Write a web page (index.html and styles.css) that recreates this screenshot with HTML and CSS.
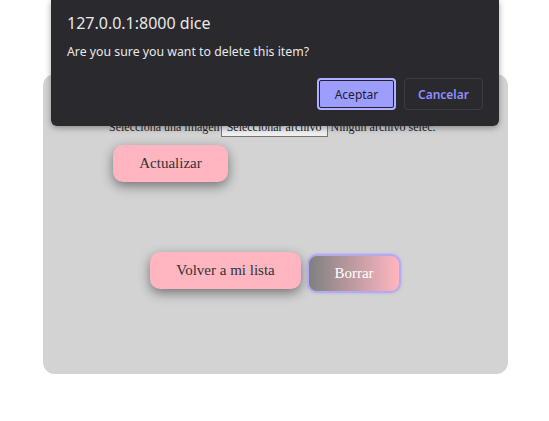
FILE: index.html
```html
<!DOCTYPE html>
<html lang="es">
<head>
<meta charset="utf-8">
<link rel="stylesheet" href="styles.css">
</head>
<body>
<main class="card">
  <form class="form">
    <div class="file-row">
      <span class="file-label">Selecciona una imagen</span>
      <span class="file-btn">Seleccionar archivo</span>
      <span class="file-name">Ningún archivo selec.</span>
    </div>
    <button type="button" class="btn btn-pink btn-update">Actualizar</button>
  </form>
  <div class="actions">
    <button type="button" class="btn btn-pink">Volver a mi lista</button>
    <button type="button" class="btn btn-delete">Borrar</button>
  </div>
</main>
<div class="dialog">
  <div class="dialog-title">127.0.0.1:8000 dice</div>
  <div class="dialog-msg">Are you sure you want to delete this item?</div>
  <div class="dialog-buttons">
    <button type="button" class="dbtn dbtn-ok">Aceptar</button>
    <button type="button" class="dbtn dbtn-cancel">Cancelar</button>
  </div>
</div>
</body>
</html>
```

FILE: styles.css
```css
html, body {
  margin: 0;
  padding: 0;
  background: #ffffff;
}
body {
  font-family: "Liberation Serif", "Times New Roman", serif;
  font-size: 16px;
  color: #222;
}
.card {
  width: 465px;
  height: 300px;
  margin: 74px 0 0 43px;
  box-sizing: border-box;
  background: #d3d3d3;
  border-radius: 12px;
  padding: 42px 0 0 66px;
}
.form {
  display: flex;
  flex-direction: column;
  align-items: flex-start;
}
.file-row {
  display: flex;
  align-items: center;
  font-size: 12px;
  height: 22px;
}
.file-btn {
  border: 1px solid #767676;
  background: #efefef;
  padding: 1px 5px;
  margin: 0 3px 0 1px;
}
.btn {
  font-family: "Liberation Serif", "Times New Roman", serif;
  font-size: 15px;
  border: none;
  border-radius: 10px;
  padding: 0;
  height: 37px;
  color: #333;
}
.btn-pink {
  background: #ffb6c1;
  box-shadow: 0 4px 12px rgba(0, 0, 0, 0.45);
}
.btn-update {
  margin: 7px 0 0 4px;
  width: 115px;
}
.actions {
  display: flex;
  align-items: flex-start;
  gap: 6px;
  margin: 70px 0 0 41px;
}
.actions .btn-pink {
  width: 151px;
}
.btn-delete {
  width: 94px;
  height: 39px;
  margin-top: 2px;
  color: #fff;
  background: linear-gradient(to right, #808080, #ffb6c1);
  border: 2px solid #b4aaf0;
  box-shadow: 0 0 3px rgba(160, 150, 240, 0.7);
}
.dialog {
  position: absolute;
  left: 51px;
  top: 0;
  width: 448px;
  height: 126px;
  box-sizing: border-box;
  background: #29292e;
  border-radius: 0 0 6px 6px;
  box-shadow: 0 2px 6px rgba(0, 0, 0, 0.35);
  padding: 13px 16px 0 16px;
  font-family: "Segoe UI", "Noto Sans", "Open Sans", sans-serif;
  color: #e8e8ea;
}
.dialog-title {
  font-size: 16px;
  line-height: 20px;
}
.dialog-msg {
  font-size: 12.3px;
  line-height: 18px;
  margin-top: 10px;
}
.dialog-buttons {
  display: flex;
  justify-content: flex-end;
  gap: 8px;
  margin-top: 17px;
}
.dbtn {
  font-family: "Segoe UI", "Noto Sans", "Open Sans", sans-serif;
  font-size: 12px;
  width: 79px;
  height: 32px;
  border-radius: 4px;
}
.dbtn-ok {
  background: #9d9dfd;
  color: #202030;
  border: 2px solid #b0b0ff;
  outline: 1px solid #202030;
  outline-offset: -3px;
}
.dbtn-cancel {
  background: transparent;
  color: #8f8fff;
  font-weight: 600;
  border: 1px solid #3c3c42;
}
```
